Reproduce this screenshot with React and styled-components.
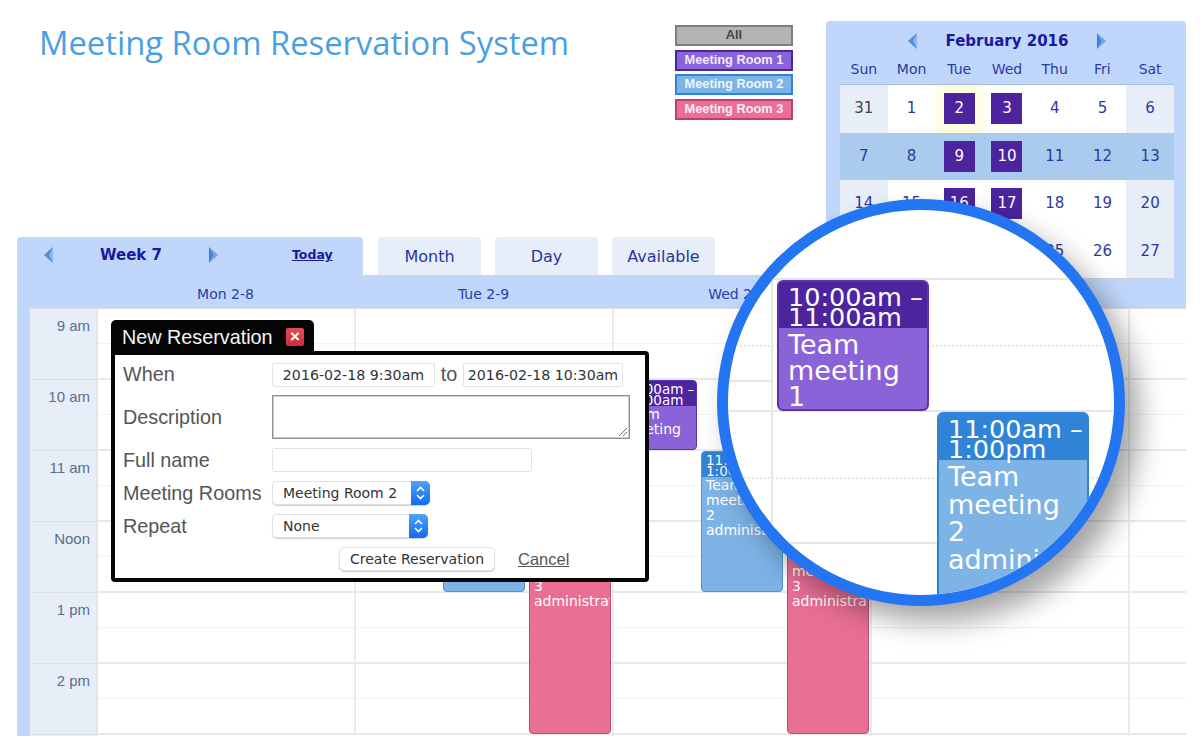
import React from "react";
import styled, { createGlobalStyle } from "styled-components";

const Global = createGlobalStyle`
  html, body { margin: 0; padding: 0; background: #fff; }
  body { width: 1200px; height: 736px; overflow: hidden; font-family: "DejaVu Sans", sans-serif; }
`;

const Page = styled.div`position: relative; width: 1200px; height: 736px; overflow: hidden; background: #fff;`;

const Top = styled.header`display: flex; align-items: flex-start; height: 237px; padding: 21px 14px 0 39px; box-sizing: border-box;`;
const Title = styled.h1`margin: 2px 0 0; width: 636px; font: 400 32.75px/40px "Open Sans", sans-serif; color: #4a9fe3; white-space: nowrap;`;
const Legend = styled.div`display: flex; flex-direction: column; gap: 3.5px; width: 118px; margin: 4px 33px 0 0;`;
const LegendBtn = styled.div`
  box-sizing: border-box; height: 21px; border: 2px solid ${p => p.$edge}; background: ${p => p.$bg};
  color: ${p => p.$fg}; font: 700 12.8px/16px "Liberation Sans", sans-serif; text-align: center; white-space: nowrap;
`;

const Mini = styled.aside`
  position: relative; z-index: 1; flex: none; width: 360px; height: 287px; box-sizing: border-box; background: #c0d7fb;
  border-radius: 4px 4px 0 0; padding: 0 12px 0 14px;
`;
const MiniNav = styled.div`display: flex; align-items: center; justify-content: center; box-sizing: border-box; height: 38px; padding-top: 2px;`;
const MiniMonth = styled.div`width: 178px; text-align: center; font: 700 15px/18px "DejaVu Sans", sans-serif; color: #1a1a9c;`;
const Arrow = styled.svg`flex: none; width: 12px; height: 18px;`;
const MiniHead = styled.div`display: grid; grid-template-columns: repeat(7, 1fr); height: 25px; font: 400 14px/20px "DejaVu Sans", sans-serif; color: #2b3a9e; text-align: center;`;
const MiniGrid = styled.div`display: grid; grid-template-columns: repeat(7, 1fr); grid-template-rows: 47.5px 47.5px 47.5px 50.5px; border-top: 1px solid #a9bcd8; border-bottom: 1px solid #cbd5e4;`;
const MiniCell = styled.div`
  display: flex; align-items: center; justify-content: center; box-sizing: border-box; padding-bottom: ${p => p.$last ? 3 : 0}px; background: ${p => p.$bg};
  font: 400 15px/1 "DejaVu Sans", sans-serif; color: ${p => p.$fg};
`;
const Picked = styled.span`display: flex; align-items: center; justify-content: center; width: 31px; height: 31px; background: #4c249e; color: #fff;`;

const Cal = styled.section`position: relative; height: 499px; margin: 0 14px 0 17px;`;
const Tabs = styled.nav`display: flex; align-items: flex-end; height: 38px; position: relative; z-index: 2;`;
const WeekTab = styled.div`
  display: flex; align-items: center; box-sizing: border-box; width: 346px; height: 38px; background: #c0d7fb;
  border-radius: 4px 4px 0 0; color: #1a1a9c; padding: 0 0 2px 25px;
`;
const WeekLabel = styled.div`width: 154px; text-align: center; font: 700 15px/18px "DejaVu Sans", sans-serif;`;
const Today = styled.a`margin-left: 72px; font: 700 12.5px/16px "DejaVu Sans", sans-serif; text-decoration: underline; color: #1a1a9c;`;
const Tab = styled.div`
  box-sizing: border-box; width: 103px; height: 38px; margin-left: ${p => p.$first ? 15 : 14}px; background: #e7eef9; border-radius: 4px 4px 0 0;
  font: 400 16px/40px "DejaVu Sans", sans-serif; color: #25389c; text-align: center;
`;
const DayBand = styled.div`
  display: grid; grid-template-columns: 79.5px 258px 258px 258px 258px 57.5px; height: 33px; background: #c0d7fb;
  font: 400 14px/38px "DejaVu Sans", sans-serif; color: #2a3da8; text-align: center;
`;
const Body = styled.div`position: relative; display: grid; grid-template-columns: 13px 68px 258px 258px 258px 258px 56px; height: 428px; overflow: hidden;`;
const Rail = styled.div`background: #c0d7fb;`;
const Hours = styled.div`background: #e7eef8; border-right: 2px solid #e3e6ea; box-sizing: border-box; border-top: 1px solid #dcdcdc;`;
const HourLabel = styled.div`
  box-sizing: border-box; height: 71px; padding: 8px 6px 0 0; border-bottom: 1px solid #dcdfe6; text-align: right;
  font: 400 15px/18px "Liberation Sans", sans-serif; color: #5a6f8c;
`;
const Day = styled.div`
  box-sizing: border-box; border-right: ${p => p.$end ? "0" : "2px solid #ebebeb"}; border-top: 1px solid #dcdcdc;
  background:
    repeating-linear-gradient(to bottom, transparent 0, transparent 34px, #f3f3f3 34px, #f3f3f3 35px, transparent 35px, transparent 69px, #e9e9e9 69px, #e9e9e9 71px);
`;

const Event = styled.div`
  position: absolute; box-sizing: border-box; left: ${p => p.$x}px; top: ${p => p.$y}px; width: ${p => p.$w}px; height: ${p => p.$h}px;
  background: ${p => p.$bg}; border: 1px solid ${p => p.$edge}; border-radius: 4px; overflow: hidden; color: #fff;
  font: 400 14px/15px "DejaVu Sans", sans-serif;
`;
const EventTime = styled.div`background: ${p => p.$bg}; padding: 3px ${p => p.$pad}px 1px; font-size: 13.5px; line-height: 10.5px; white-space: nowrap;`;
const EventText = styled.div`padding: 1px ${p => p.$pad}px 0; white-space: nowrap;`;

const Dialog = styled.div`position: absolute; z-index: 3; left: 94px; top: 83px; width: 538px; height: 262px;`;
const DialogTab = styled.div`
  display: flex; align-items: center; box-sizing: border-box; width: 203px; height: 33px; background: #050505; border-radius: 5px 5px 0 0;
  padding: 0 10px 0 11px; color: #f4f4f4; font: 400 19.8px/22px "Liberation Sans", sans-serif; justify-content: space-between; white-space: nowrap;
`;
const Close = styled.span`
  display: flex; align-items: center; justify-content: center; flex: none; width: 18px; height: 18px; border-radius: 2px; background: linear-gradient(#e24c58, #c92f40);
  color: #fff; font: 700 17px/1 "Liberation Sans", sans-serif;
`;
const DialogBody = styled.div`
  box-sizing: border-box; width: 538px; height: 231px; margin-top: -2px; background: #fff; border: 4px solid #050505; border-radius: 0 4px 4px 4px;
  padding: 8px 0 0 8px; display: flex; flex-direction: column; font: 400 19.8px/22px "Liberation Sans", sans-serif; color: #555;
`;
const Row = styled.div`display: flex; align-items: center; height: ${p => p.$h}px; margin-top: ${p => p.$mt || 0}px;`;
const FieldLabel = styled.div`width: 149px; flex: none; white-space: nowrap; margin-top: ${p => p.$up ? -2 : 0}px;`;
const Input = styled.div`
  box-sizing: border-box; width: ${p => p.$w}px; height: 24px; border: 1px solid #e3e3e3; border-radius: 2px; text-align: center;
  font: 400 14.2px/22px "DejaVu Sans", "Liberation Sans", sans-serif; color: #333; white-space: nowrap; background: #fff;
`;
const To = styled.div`width: 28px; text-align: center; margin-top: -3px;`;
const Area = styled.div`
  position: relative; box-sizing: border-box; width: 358px; height: 44px; border: 1px solid #8f8f8f; box-shadow: inset 0 0 0 1px #cfcfcf; background: #fff;
`;
const Grip = styled.svg`position: absolute; right: 1px; bottom: 1px; width: 11px; height: 11px;`;
const Select = styled.div`
  box-sizing: border-box; display: flex; justify-content: space-between; align-items: center; width: ${p => p.$w}px; height: 24px;
  border: 1px solid #e0e0e0; border-right: 0; border-radius: 5px; padding-left: 10px; font: 400 14px/22px "DejaVu Sans", "Liberation Sans", sans-serif; color: #333;
  box-shadow: 0 1px 1px #cfcfcf;
`;
const Stepper = styled.span`
  display: flex; align-items: center; justify-content: center; width: 19px; height: 24px; margin-top: -1px; background: linear-gradient(#4ea1fb, #0f6cf0); border-radius: 0 5px 5px 0;
`;
const Actions = styled.div`display: flex; align-items: center; height: 26px; margin-top: 8px; padding-left: 216px;`;
const Submit = styled.div`
  box-sizing: border-box; width: 156px; height: 24px; border: 1px solid #e2e2e2; border-radius: 5px; box-shadow: 0 1px 1px #ccc; text-align: center;
  font: 400 14px/22px "DejaVu Sans", "Liberation Sans", sans-serif; color: #333; background: #fff;
`;
const Cancel = styled.a`margin-left: 23px; font: 400 16.5px/20px "Liberation Sans", sans-serif; color: #555; text-decoration: underline;`;

const Lens = styled.div`
  position: absolute; z-index: 4; left: 717px; top: 199px; width: 408px; height: 407px; box-sizing: border-box; border: 11px solid #2475f2; border-radius: 50%;
  background: #fff; overflow: hidden; box-shadow: 14px 16px 28px rgba(0,0,0,.36);
`;
const LensH = styled.div`
  position: absolute; left: ${p => p.$l || 0}px; width: ${p => p.$w ? `${p.$w}px` : "100%"}; top: ${p => p.$y}px;
  border-top: ${p => p.$dot ? "2px dotted #e4e4e4" : "2px solid #e6e6e6"};
`;
const LensV = styled.div`position: absolute; top: 69px; bottom: 0; left: ${p => p.$x}px; width: 2px; background: #e6e6e6;`;
const LensEvent = styled.div`
  position: absolute; box-sizing: border-box; left: ${p => p.$x}px; top: ${p => p.$y}px; width: 152px; height: ${p => p.$h}px; background: ${p => p.$bg};
  border: 2px solid ${p => p.$edge}; border-radius: 6px; overflow: hidden; color: #fff;
  font-family: "DejaVu Sans", sans-serif;
`;
const LensTime = styled.div`background: ${p => p.$bg}; box-sizing: border-box; height: 46px; padding: 5px 9px 0; font-size: 25.5px; line-height: 20px; white-space: nowrap;`;
const LensText = styled.div`padding: ${p => p.$top}px 9px 0; font-size: 27px; line-height: ${p => p.$lh}px; white-space: nowrap;`;

const Left = () => (
  <Arrow viewBox="0 0 12 18"><path d="M11 1 L2 9 L11 17 Z" fill="#4b8de0" /><path d="M11 1 L7 9 L11 17 Z" fill="#8fb6ea" /></Arrow>
);
const Right = () => (
  <Arrow viewBox="0 0 12 18"><path d="M1 1 L10 9 L1 17 Z" fill="#6fa3e8" /><path d="M1 1 L5 9 L1 17 Z" fill="#3f7fd8" /></Arrow>
);
const Updown = () => (
  <svg width="11" height="16" viewBox="0 0 11 16" fill="none" stroke="#fff" strokeWidth="1.6"><path d="M2 6 L5.5 2.5 L9 6" /><path d="M2 10 L5.5 13.5 L9 10" /></svg>
);

const legend = [
  ["All", "#b4b4b4", "#7e7e7e", "#444"],
  ["Meeting Room 1", "#8a63d8", "#4c249e", "#f3eaff"],
  ["Meeting Room 2", "#7eb3e6", "#2f84d8", "#eef6ff"],
  ["Meeting Room 3", "#e96f95", "#c23e66", "#ffeef3"],
];
const weeks = [
  [31,1,2,3,4,5,6],[7,8,9,10,11,12,13],[14,15,16,17,18,19,20],[21,22,23,24,25,26,27],
];
const picked = [2,3,9,10,16,17];

const cellBg = (r, c, d) => {
  if (r === 1) return "#abcbee";
  if (d === 2) return "#fffde4";
  if (c === 0 || c === 6) return "#e7eef8";
  return "#fff";
};

const blue = { $bg: "#7eb3e6", $edge: "#4f93d6" };
const pink = { $bg: "#e96f95", $edge: "#b8506f" };

export default function App() {
  return (
    <Page>
      <Global />
      <Top>
        <Title>Meeting Room Reservation System</Title>
        <Legend>
          {legend.map(([t, bg, edge, fg]) => <LegendBtn key={t} $bg={bg} $edge={edge} $fg={fg}>{t}</LegendBtn>)}
        </Legend>
        <Mini>
          <MiniNav><Left /><MiniMonth>February 2016</MiniMonth><Right /></MiniNav>
          <MiniHead>{["Sun","Mon","Tue","Wed","Thu","Fri","Sat"].map(d => <div key={d}>{d}</div>)}</MiniHead>
          <MiniGrid>
            {weeks.map((w, r) => w.map((d, c) => (
              <MiniCell key={d} $last={r === 3} $bg={cellBg(r, c, d)} $fg={d === 31 ? "#444" : "#2b3a9e"}>
                {picked.includes(d) ? <Picked>{d}</Picked> : d}
              </MiniCell>
            )))}
          </MiniGrid>
        </Mini>
      </Top>
      <Cal>
        <Tabs>
          <WeekTab><Left /><WeekLabel>Week 7</WeekLabel><Right /><Today>Today</Today></WeekTab>
          <Tab $first>Month</Tab><Tab>Day</Tab><Tab>Available</Tab>
        </Tabs>
        <DayBand>
          <div /><div>Mon 2-8</div><div>Tue 2-9</div><div>Wed 2-10</div><div /><div />
        </DayBand>
        <Body>
          <Rail />
          <Hours>{["9 am","10 am","11 am","Noon","1 pm","2 pm"].map(h => <HourLabel key={h}>{h}</HourLabel>)}</Hours>
          <Day /><Day /><Day /><Day /><Day $end />
          <Event $x={597} $y={72} $w={83} $h={70} $bg="#8a63d8" $edge="#5a34b0">
            <EventTime $bg="#4c249e" $pad={8}>10:00am –<br />11:00am</EventTime>
            <EventText $pad={8}>Team<br />meeting<br />1</EventText>
          </Event>
          <Event $x={426} $y={143} $w={82} $h={141} {...blue} />
          <Event $x={684} $y={143} $w={82} $h={141} {...blue}>
            <EventTime $bg="#2f84d8" $pad={4}>11:00am –<br />1:00pm</EventTime>
            <EventText $pad={4}>Team<br />meeting<br />2<br />administrator</EventText>
          </Event>
          <Event $x={512} $y={214} $w={82} $h={212} {...pink}>
            <EventTime $bg="#c23e66" $pad={4}>12:00pm –<br />3:00pm</EventTime>
            <EventText $pad={4}>Team<br />meeting<br />3<br />administrator</EventText>
          </Event>
          <Event $x={770} $y={214} $w={82} $h={212} {...pink}>
            <EventTime $bg="#c23e66" $pad={4}>12:00pm –<br />3:00pm</EventTime>
            <EventText $pad={4}>Team<br />meeting<br />3<br />administrator</EventText>
          </Event>
        </Body>
        <Dialog>
          <DialogTab>New Reservation<Close>×</Close></DialogTab>
          <DialogBody>
            <Row $h={24}>
              <FieldLabel $up>When</FieldLabel>
              <Input $w={163}>2016-02-18 9:30am</Input><To>to</To><Input $w={160}>2016-02-18 10:30am</Input>
            </Row>
            <Row $h={44} $mt={8}>
              <FieldLabel>Description</FieldLabel>
              <Area><Grip viewBox="0 0 11 11" stroke="#777" fill="none"><path d="M10 2 L2 10 M10 6 L6 10" /></Grip></Area>
            </Row>
            <Row $h={24} $mt={9}><FieldLabel>Full name</FieldLabel><Input $w={260} /></Row>
            <Row $h={24} $mt={9}><FieldLabel>Meeting Rooms</FieldLabel><Select $w={158}>Meeting Room 2<Stepper><Updown /></Stepper></Select></Row>
            <Row $h={24} $mt={9}><FieldLabel>Repeat</FieldLabel><Select $w={156}>None<Stepper><Updown /></Stepper></Select></Row>
            <Actions><Submit>Create Reservation</Submit><Cancel>Cancel</Cancel></Actions>
          </DialogBody>
        </Dialog>
      </Cal>
      <Lens>
        <LensH $y={68} />
        <LensH $y={135} $dot />
        <LensH $l={0} $w={43} $y={170} />
        <LensH $y={200} />
        <LensH $y={267} $dot />
        <LensH $y={332} />
        <LensV $x={43} />
        <LensEvent $x={49} $y={70} $h={131} $bg="#8a63d8" $edge="#5a34b0">
          <LensTime $bg="#4c249e">10:00am –<br />11:00am</LensTime>
          <LensText $top={4} $lh={26}>Team<br />meeting<br />1</LensText>
        </LensEvent>
        <LensEvent $x={209} $y={202} $h={201} $bg="#7eb3e6" $edge="#2f84d8">
          <LensTime $bg="#2f84d8">11:00am –<br />1:00pm</LensTime>
          <LensText $top={3} $lh={27.5}>Team<br />meeting<br />2<br />administrator</LensText>
        </LensEvent>
      </Lens>
    </Page>
  );
}
